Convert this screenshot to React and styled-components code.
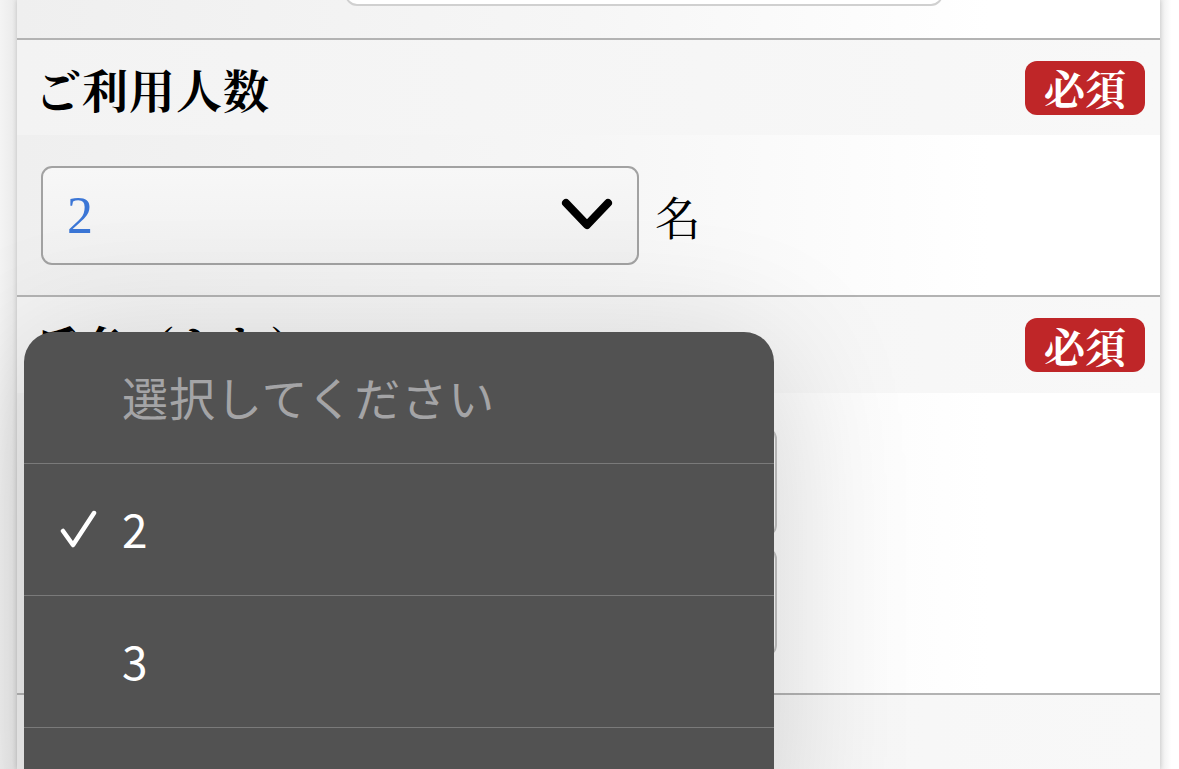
import React from 'react';
import styled, { createGlobalStyle } from 'styled-components';

const GlobalStyle = createGlobalStyle`
  html, body {
    margin: 0;
    padding: 0;
    background: #fff;
    overflow: hidden;
  }
`;

const Screen = styled.div`
  position: relative;
  width: 1179px;
  height: 769px;
  overflow: hidden;
  display: flex;
  background: #fff;
`;

const Gutter = styled.div`
  width: ${p => p.w}px;
  flex-shrink: 0;
  background: ${p => p.bg};
`;

const Panel = styled.div`
  width: 1143px;
  flex-shrink: 0;
  display: flex;
  flex-direction: column;
  background: #fff;
  box-shadow: 0 0 5px rgba(0, 0, 0, 0.18);
  z-index: 1;
`;

const Body = styled.div`
  height: ${p => p.h}px;
  flex-shrink: 0;
  box-sizing: border-box;
  overflow: hidden;
  display: flex;
  flex-direction: ${p => (p.column ? 'column' : 'row')};
  align-items: ${p => (p.column ? 'stretch' : 'center')};
  gap: ${p => p.gap || 0}px;
  padding: ${p => p.pad || '0 24px'};
  background: linear-gradient(to right, #efefef 0%, #f6f6f6 50%, #ffffff 85%);
`;

const Header = styled.div`
  height: ${p => p.h}px;
  flex-shrink: 0;
  box-sizing: border-box;
  border-top: 2px solid #b3b3b3;
  display: flex;
  align-items: center;
  justify-content: space-between;
  padding: 0 15px 0 18px;
  background: linear-gradient(to right, #f3f3f3 0%, #f6f6f6 60%, #f8f8f8 100%);
`;

const Title = styled.h2`
  margin: 0;
  font-family: "Noto Serif CJK JP", "Noto Sans CJK JP", serif;
  font-weight: 700;
  font-size: 46px;
  letter-spacing: 1px;
  color: #000;
  line-height: 1;
`;

const Badge = styled.span`
  width: 120px;
  height: 54px;
  border-radius: 12px;
  background: #bf2628;
  color: #fff;
  display: flex;
  align-items: center;
  justify-content: center;
  font-family: "Noto Serif CJK JP", "Noto Sans CJK JP", serif;
  font-weight: 700;
  font-size: 41px;
  line-height: 1;
`;

const TopField = styled.div`
  align-self: flex-start;
  margin: -60px 0 0 328px;
  width: 598px;
  height: 66px;
  box-sizing: border-box;
  border: 2px solid #d0d0d0;
  border-radius: 12px;
  background: #fff;
`;

const Select = styled.div`
  width: 598px;
  height: 99px;
  box-sizing: border-box;
  border: 2px solid #a2a2a2;
  border-radius: 11px;
  display: flex;
  align-items: center;
  justify-content: space-between;
  padding: 0 24px 0 24px;
  background: linear-gradient(to bottom, #f7f7f7, #f0f0f0);
`;

const SelectValue = styled.span`
  font-family: "Liberation Serif", serif;
  font-size: 52px;
  color: #3b76d6;
`;

const Unit = styled.span`
  margin-left: 16px;
  font-family: "Noto Serif CJK JP", "Noto Sans CJK JP", serif;
  font-size: 46px;
  color: #000;
`;

const TextField = styled.div`
  width: 736px;
  height: 110px;
  box-sizing: border-box;
  border: 2px solid #c2c2c2;
  border-radius: 12px;
  background: #fafafa;
`;

const Menu = styled.div`
  position: absolute;
  left: 24px;
  top: 332px;
  width: 750px;
  height: 520px;
  background: #525252;
  border-radius: 30px 30px 0 0;
  box-shadow: 0 20px 140px rgba(0, 0, 0, 0.16);
  display: flex;
  flex-direction: column;
  z-index: 5;
`;

const Item = styled.div`
  height: 132px;
  flex-shrink: 0;
  box-sizing: border-box;
  border-bottom: 1px solid #7a7a7a;
  display: flex;
  align-items: center;
  padding-left: 36px;
  padding-bottom: 4px;
  font-family: "Noto Sans CJK JP", "Noto Sans", sans-serif;
  font-size: 46px;
  letter-spacing: ${p => (p.muted ? '1px' : '0')};
  color: ${p => (p.muted ? '#a4a4a6' : '#ffffff')};
  &:last-child {
    border-bottom: none;
  }
`;

const CheckSlot = styled.span`
  width: 62px;
  height: 40px;
  flex-shrink: 0;
  display: flex;
  align-items: center;
  margin-top: 4px;
`;

const Chevron = () => (
  <svg width="52" height="36" viewBox="0 0 52 36">
    <polyline points="5,6 26,28 47,6" fill="none" stroke="#000" strokeWidth="8" strokeLinecap="round" strokeLinejoin="round" />
  </svg>
);

const Check = () => (
  <svg width="40" height="40" viewBox="0 0 40 40">
    <polyline points="3,21 13,35 34,3" fill="none" stroke="#fff" strokeWidth="4.5" strokeLinecap="round" strokeLinejoin="round" />
  </svg>
);

const options = [
  { label: '選択してください', muted: true },
  { label: '2', checked: true },
  { label: '3' },
  { label: '4' },
];

export default function App() {
  return (
    <Screen>
      <GlobalStyle />
      <Gutter w={17} bg="linear-gradient(to right, #f4f4f4, #e9e9e9)" />
      <Panel>
        <Body h={38} pad="0">
          <TopField />
        </Body>
        <Header h={97}>
          <Title>ご利用人数</Title>
          <Badge>必須</Badge>
        </Header>
        <Body h={160}>
          <Select>
            <SelectValue>2</SelectValue>
            <Chevron />
          </Select>
          <Unit>名</Unit>
        </Body>
        <Header h={98}>
          <Title>氏名（かな）</Title>
          <Badge>必須</Badge>
        </Header>
        <Body h={300} column gap={10} pad="34px 24px 0">
          <TextField />
          <TextField />
        </Body>
        <Header h={120} />
      </Panel>
      <Gutter w={19} bg="linear-gradient(to right, #ececec, #ffffff 60%)" />

      <Menu>
        {options.map(o => (
          <Item key={o.label} muted={o.muted}>
            <CheckSlot>{o.checked && <Check />}</CheckSlot>
            {o.label}
          </Item>
        ))}
      </Menu>
    </Screen>
  );
}
